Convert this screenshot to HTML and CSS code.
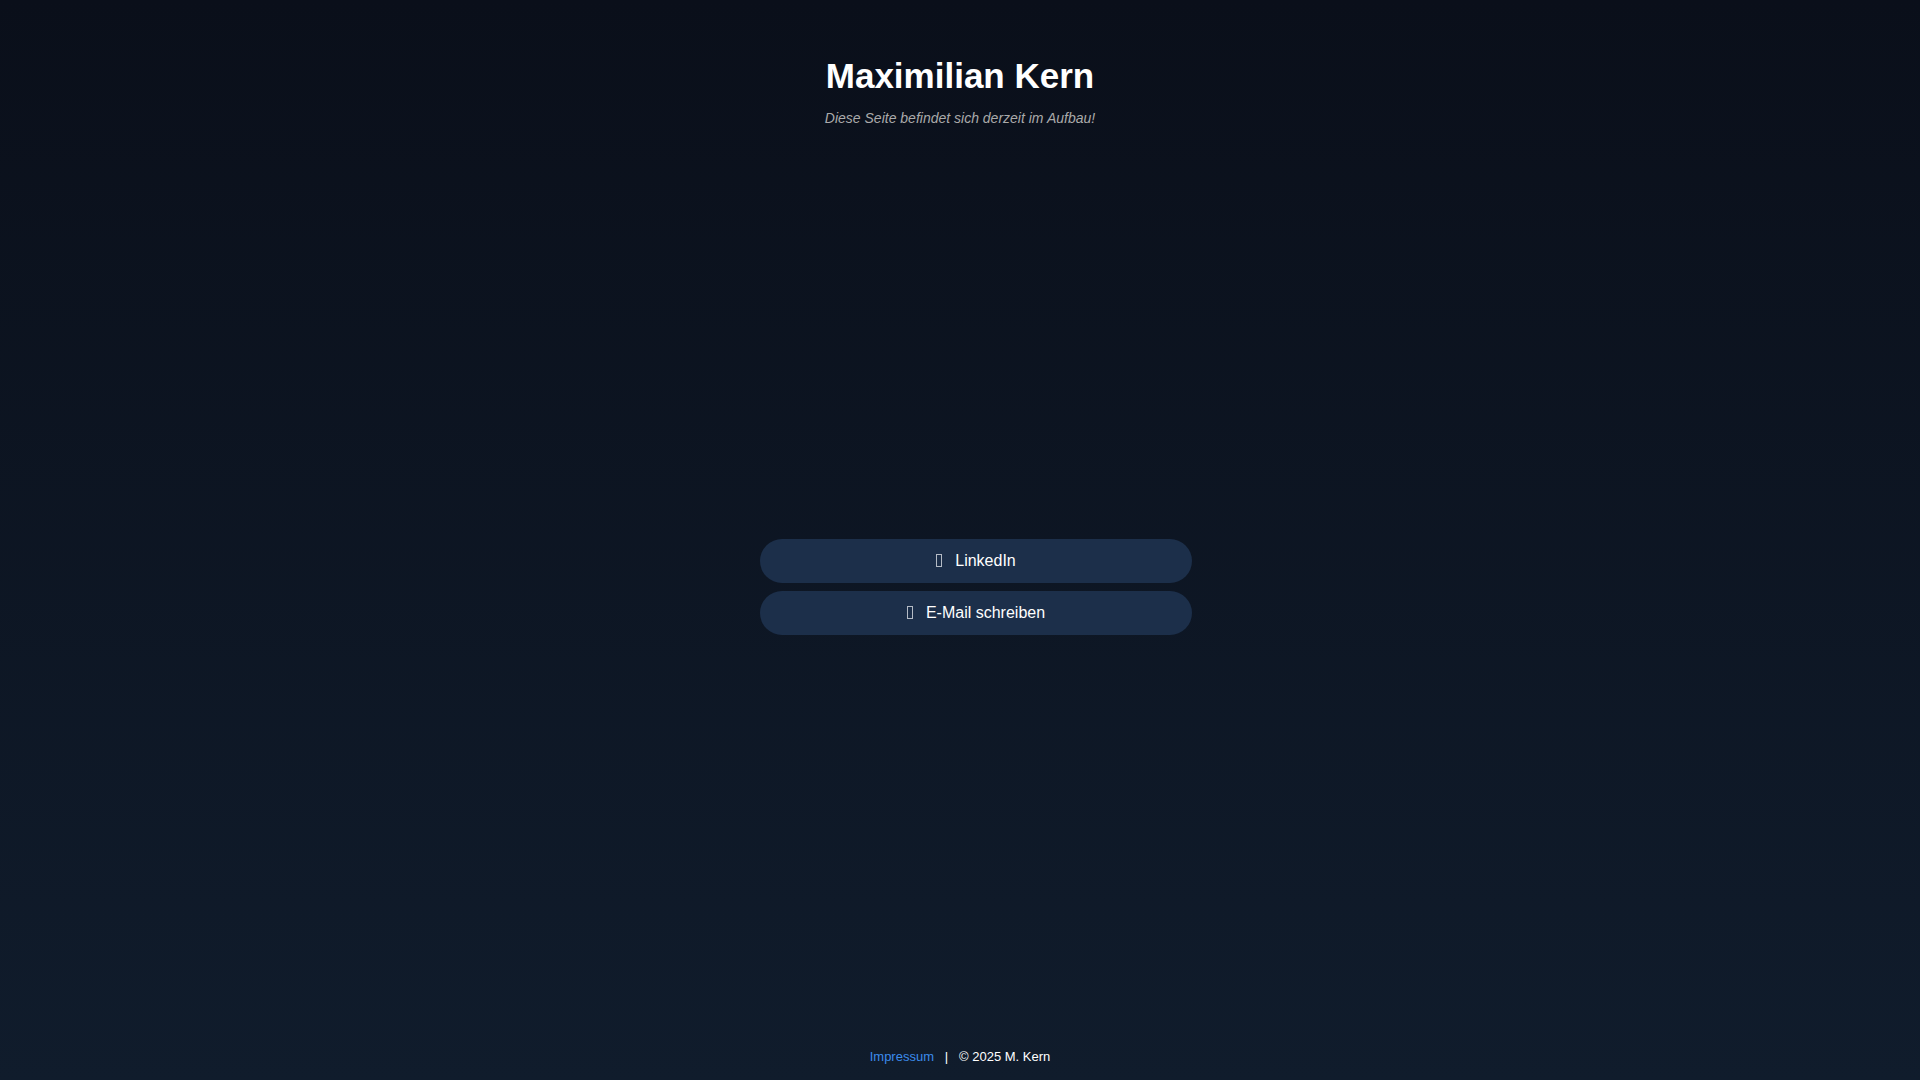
FILE: index.html
```html
<!DOCTYPE html>
<html lang="de">
<head>
  <meta charset="UTF-8">
  <meta name="viewport" content="width=device-width, initial-scale=1.0">
  <title>Maximilian Kern</title>
  <link rel="stylesheet" href="styles.css">
</head>
<body>
  <header>
    <h1>Maximilian Kern</h1>
    <p class="subtitle">Diese Seite befindet sich derzeit im Aufbau!</p>
  </header>
  <main>
    <ul class="links">
      <li><a class="link-btn" href="#linkedin"><svg class="icon" viewBox="0 0 7 14" aria-hidden="true"><rect x="0.5" y="0.5" width="5" height="12"/></svg>LinkedIn</a></li>
      <li><a class="link-btn" href="#mail"><svg class="icon" viewBox="0 0 7 14" aria-hidden="true"><rect x="0.5" y="0.5" width="5" height="12"/></svg>E-Mail schreiben</a></li>
    </ul>
  </main>
  <footer><a href="#impressum">Impressum</a> &nbsp; | &nbsp; © 2025 M. Kern</footer>
</body>
</html>
```

FILE: styles.css
```css
body {
  margin: 0;
  min-height: 100vh;
  display: flex;
  flex-direction: column;
  font-family: "Liberation Sans", Arial, sans-serif;
  color: #fff;
  background: linear-gradient(to bottom, #0a0f1a, #101c2c);
}
header {
  padding-top: 56px;
  text-align: center;
}
h1 {
  margin: 0;
  font-size: 35px;
  line-height: 40px;
}
.subtitle {
  margin: 14px 0 0;
  font-size: 14px;
  line-height: 16px;
  font-style: italic;
  color: #aaa;
}
main {
  flex: 1;
  display: flex;
  align-items: center;
  justify-content: center;
  padding-top: 14px;
}
.links {
  list-style: none;
  width: 432px;
  margin: 0;
  padding: 0 0 0 32px;
  display: flex;
  flex-direction: column;
  gap: 8px;
}
.link-btn {
  display: flex;
  align-items: center;
  justify-content: center;
  gap: 12px;
  padding: 12px;
  border-radius: 30px;
  background-color: #1c2f4a;
  color: #fff;
  font-size: 16px;
  line-height: 20px;
  text-decoration: none;
}
.icon {
  width: 7px;
  height: 14px;
  fill: none;
  stroke: #b4bbc5;
}
footer {
  padding: 16px;
  text-align: center;
  font-size: 13px;
  line-height: 15px;
}
footer a {
  color: #3b8beb;
  text-decoration: none;
}
```
